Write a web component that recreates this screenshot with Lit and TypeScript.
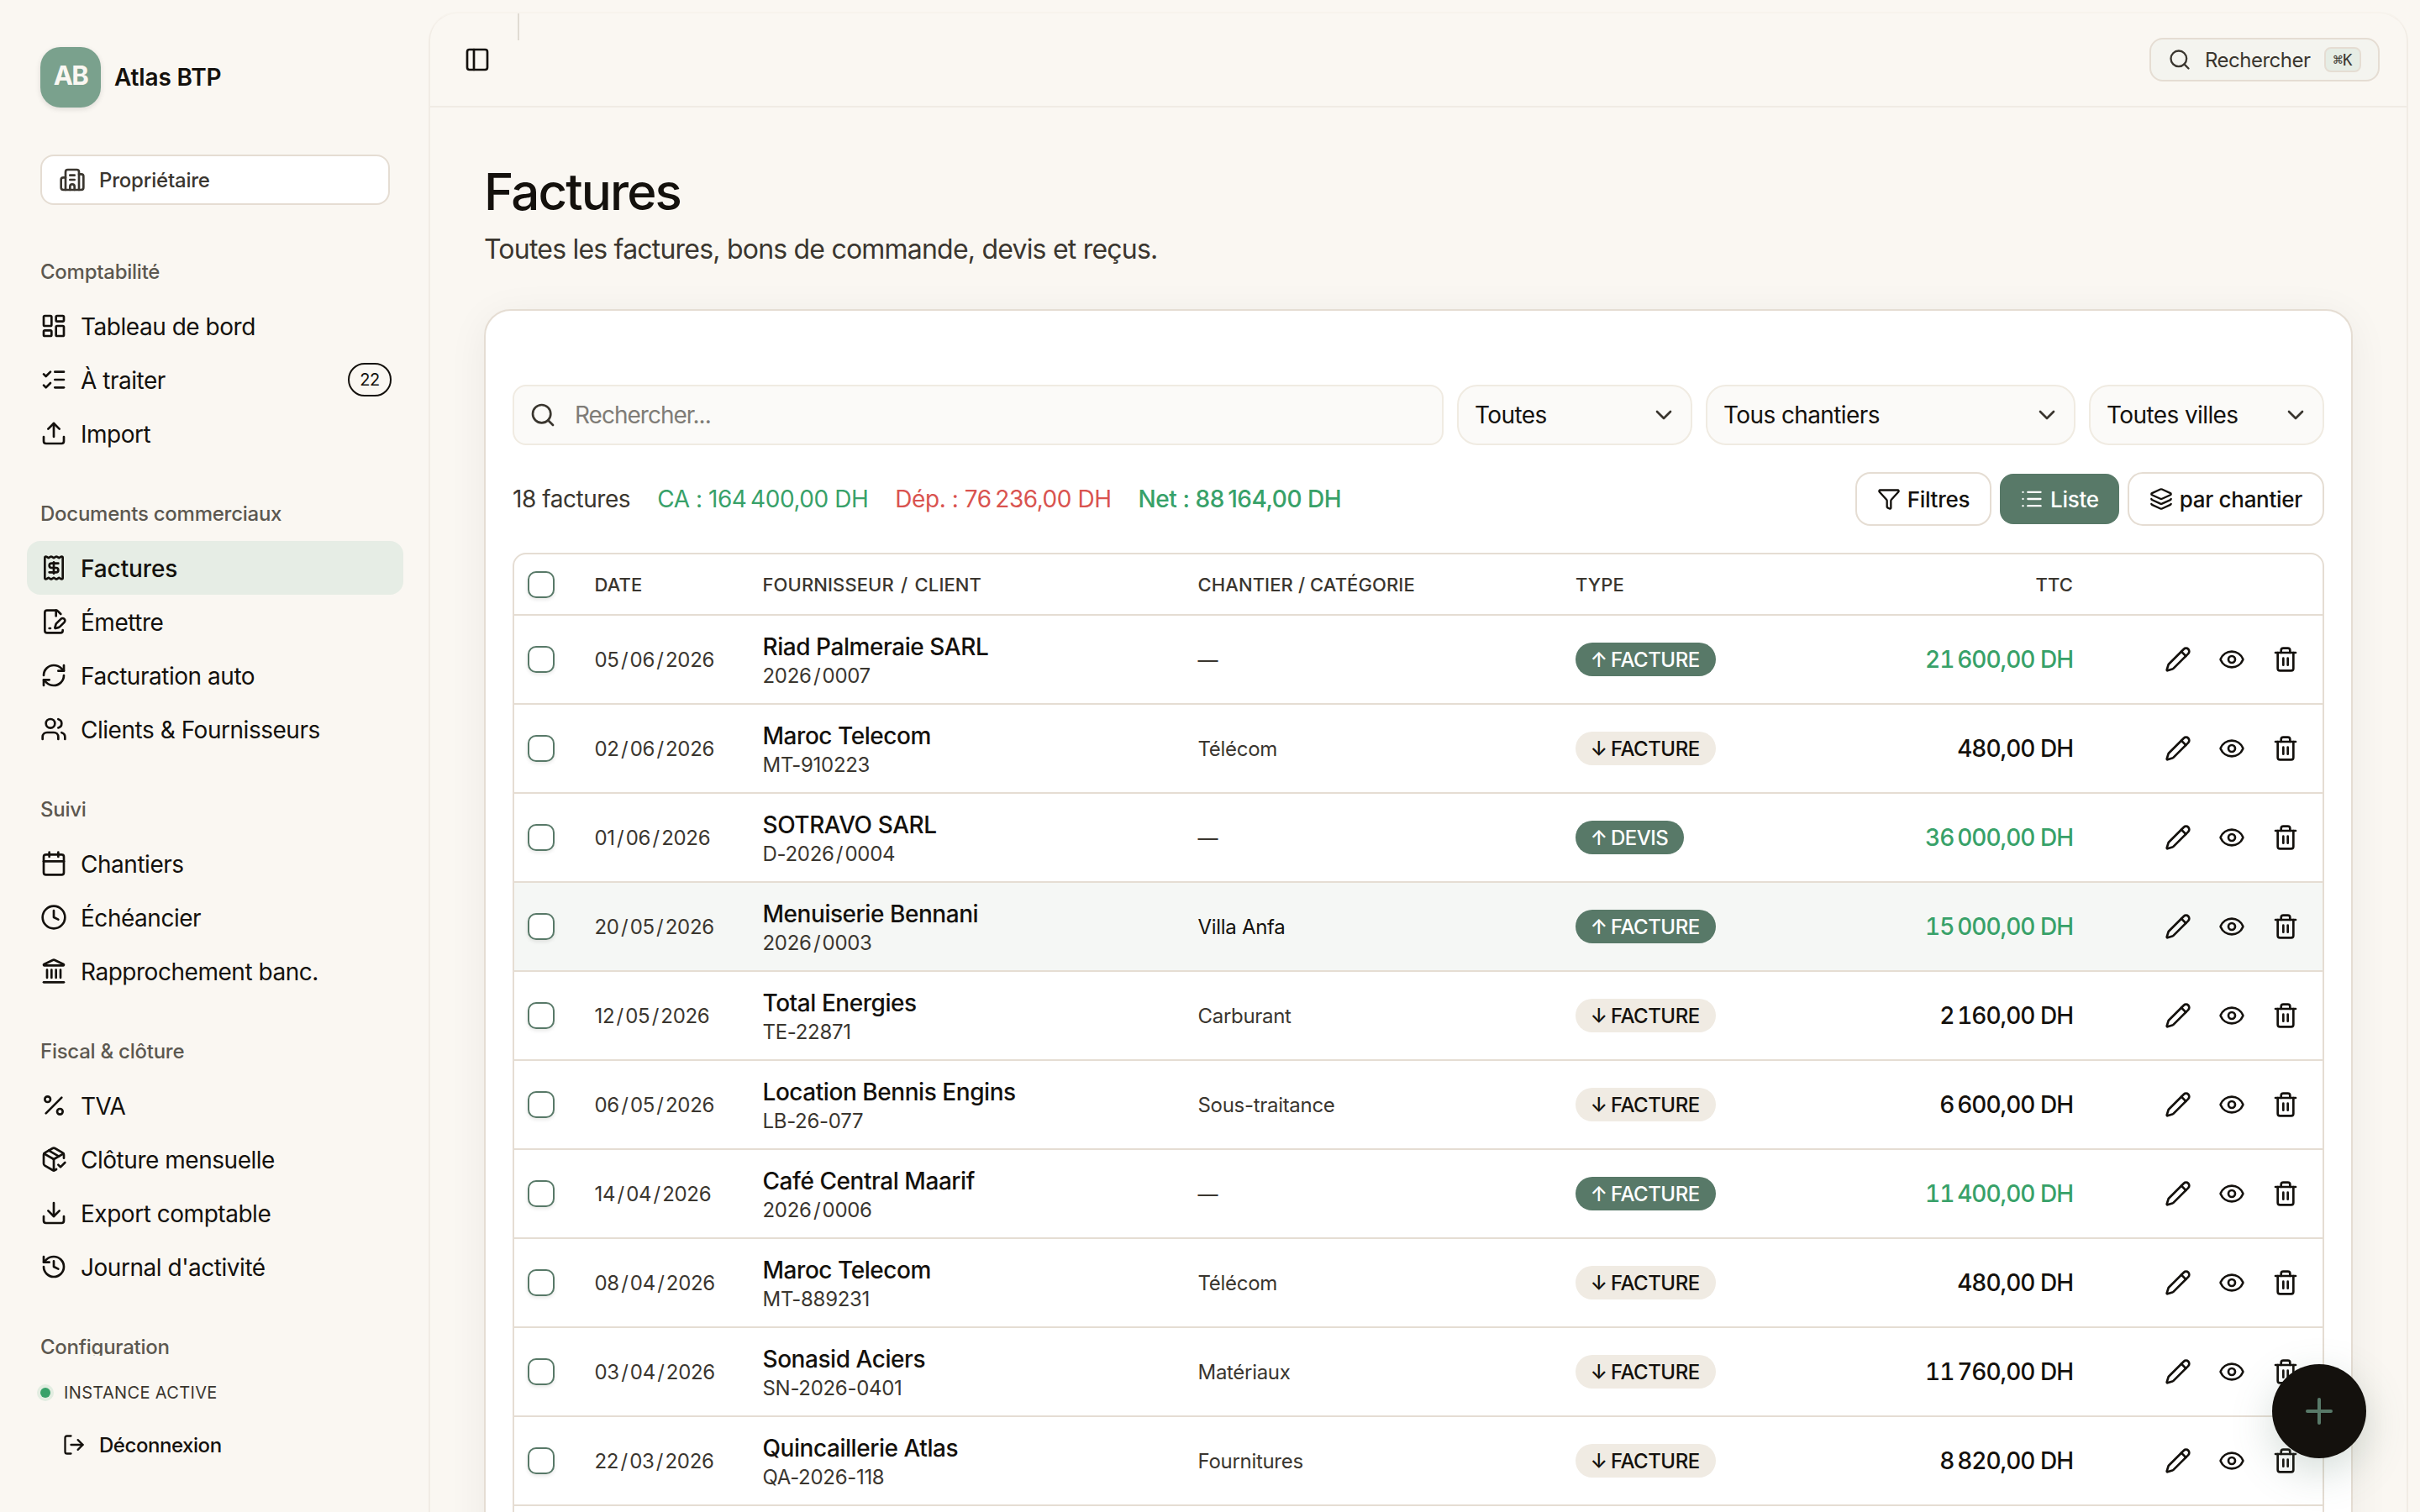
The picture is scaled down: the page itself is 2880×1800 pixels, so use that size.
import { LitElement, html, css, svg } from 'lit';
import { customElement, property } from 'lit/decorators.js';

const icons: Record<string, any> = {
  panel: svg`<rect width="18" height="18" x="3" y="3" rx="2"/><path d="M9 3v18"/>`,
  search: svg`<path d="m21 21-4.34-4.34"/><circle cx="11" cy="11" r="8"/>`,
  building: svg`<path d="M10 12h4"/><path d="M10 8h4"/><path d="M14 21v-3a2 2 0 0 0-4 0v3"/><path d="M6 10H4a2 2 0 0 0-2 2v7a2 2 0 0 0 2 2h16a2 2 0 0 0 2-2V9a2 2 0 0 0-2-2h-2"/><path d="M6 21V5a2 2 0 0 1 2-2h8a2 2 0 0 1 2 2v16"/>`,
  dashboard: svg`<rect width="7" height="9" x="3" y="3" rx="1"/><rect width="7" height="5" x="14" y="3" rx="1"/><rect width="7" height="9" x="14" y="12" rx="1"/><rect width="7" height="5" x="3" y="16" rx="1"/>`,
  checks: svg`<path d="M13 5h8"/><path d="M13 12h8"/><path d="M13 19h8"/><path d="m3 17 2 2 4-4"/><path d="m3 7 2 2 4-4"/>`,
  upload: svg`<path d="M12 3v12"/><path d="m17 8-5-5-5 5"/><path d="M21 15v4a2 2 0 0 1-2 2H5a2 2 0 0 1-2-2v-4"/>`,
  receipt: svg`<path d="M12 17V7"/><path d="M16 8h-6a2 2 0 0 0 0 4h4a2 2 0 0 1 0 4H8"/><path d="M4 3a1 1 0 0 1 1-1 1.3 1.3 0 0 1 .7.2l.933.6a1.3 1.3 0 0 0 1.4 0l.934-.6a1.3 1.3 0 0 1 1.4 0l.933.6a1.3 1.3 0 0 0 1.4 0l.933-.6a1.3 1.3 0 0 1 1.4 0l.934.6a1.3 1.3 0 0 0 1.4 0l.933-.6A1.3 1.3 0 0 1 19 2a1 1 0 0 1 1 1v18a1 1 0 0 1-1 1 1.3 1.3 0 0 1-.7-.2l-.933-.6a1.3 1.3 0 0 0-1.4 0l-.934.6a1.3 1.3 0 0 1-1.4 0l-.933-.6a1.3 1.3 0 0 0-1.4 0l-.933.6a1.3 1.3 0 0 1-1.4 0l-.934-.6a1.3 1.3 0 0 0-1.4 0l-.933.6a1.3 1.3 0 0 1-.7.2 1 1 0 0 1-1-1z"/>`,
  filePen: svg`<path d="m18.226 5.226-2.52-2.52A2.4 2.4 0 0 0 14 2H6a2 2 0 0 0-2 2v16a2 2 0 0 0 2 2h12a2 2 0 0 0 2-2v-.351"/><path d="M14 2v5"/><path d="M21.378 12.626a1 1 0 0 0-3.004-3.004l-4.01 4.012a2 2 0 0 0-.506.854l-.837 2.87a.5.5 0 0 0 .62.62l2.87-.837a2 2 0 0 0 .854-.506z"/><path d="M8 18h1"/>`,
  refresh: svg`<path d="M3 12a9 9 0 0 1 9-9 9.75 9.75 0 0 1 6.74 2.74L21 8"/><path d="M21 3v5h-5"/><path d="M21 12a9 9 0 0 1-9 9 9.75 9.75 0 0 1-6.74-2.74L3 16"/><path d="M8 16H3v5"/>`,
  users: svg`<path d="M16 21v-2a4 4 0 0 0-4-4H6a4 4 0 0 0-4 4v2"/><path d="M16 3.128a4 4 0 0 1 0 7.744"/><path d="M22 21v-2a4 4 0 0 0-3-3.87"/><circle cx="9" cy="7" r="4"/>`,
  calendar: svg`<path d="M8 2v4"/><path d="M16 2v4"/><rect width="18" height="18" x="3" y="4" rx="2"/><path d="M3 10h18"/>`,
  clock: svg`<path d="M12 6v6l4 2"/><circle cx="12" cy="12" r="10"/>`,
  landmark: svg`<path d="M10 18v-7"/><path d="M11.12 2.198a2 2 0 0 1 1.76.006l7.866 3.847c.476.233.31.949-.22.949H3.474c-.53 0-.695-.716-.22-.949z"/><path d="M14 18v-7"/><path d="M18 18v-7"/><path d="M3 22h18"/><path d="M6 18v-7"/>`,
  percent: svg`<path d="M19 5 5 19"/><circle cx="6.5" cy="6.5" r="2.5"/><circle cx="17.5" cy="17.5" r="2.5"/>`,
  packageCheck: svg`<path d="m16 17 2 2 4-4"/><path d="M21 11V8a2 2 0 0 0-1-1.73l-7-4a2 2 0 0 0-2 0l-7 4A2 2 0 0 0 3 8v8a2 2 0 0 0 1 1.73l7 4a2 2 0 0 0 2 0l1.32-.753"/><path d="m7.5 4.27 9 5.15"/><path d="M3.29 7 12 12l8.71-5"/><path d="M12 22V12"/>`,
  download: svg`<path d="M12 15V3"/><path d="M21 15v4a2 2 0 0 1-2 2H5a2 2 0 0 1-2-2v-4"/><path d="m7 10 5 5 5-5"/>`,
  history: svg`<path d="M3 12a9 9 0 1 0 9-9 9.75 9.75 0 0 0-6.74 2.74L3 8"/><path d="M3 3v5h5"/><path d="M12 7v5l4 2"/>`,
  logout: svg`<path d="m16 17 5-5-5-5"/><path d="M21 12H9"/><path d="M9 21H5a2 2 0 0 1-2-2V5a2 2 0 0 1 2-2h4"/>`,
  chevron: svg`<path d="m6 9 6 6 6-6"/>`,
  funnel: svg`<path d="M10 20a1 1 0 0 0 .553.895l2 1A1 1 0 0 0 14 21v-7a2 2 0 0 1 .517-1.341L21.74 4.67A1 1 0 0 0 21 3H3a1 1 0 0 0-.742 1.67l7.225 7.989A2 2 0 0 1 10 14z"/>`,
  list: svg`<path d="M3 5h.01"/><path d="M3 12h.01"/><path d="M3 19h.01"/><path d="M8 5h13"/><path d="M8 12h13"/><path d="M8 19h13"/>`,
  layers: svg`<path d="M12.83 2.18a2 2 0 0 0-1.66 0L2.6 6.08a1 1 0 0 0 0 1.83l8.58 3.91a2 2 0 0 0 1.66 0l8.58-3.9a1 1 0 0 0 0-1.83z"/><path d="M2 12a1 1 0 0 0 .58.91l8.6 3.91a2 2 0 0 0 1.65 0l8.58-3.9A1 1 0 0 0 22 12"/><path d="M2 17a1 1 0 0 0 .58.91l8.6 3.91a2 2 0 0 0 1.65 0l8.58-3.9A1 1 0 0 0 22 17"/>`,
  pencil: svg`<path d="M21.174 6.812a1 1 0 0 0-3.986-3.987L3.842 16.174a2 2 0 0 0-.5.83l-1.321 4.352a.5.5 0 0 0 .623.622l4.353-1.32a2 2 0 0 0 .83-.497z"/><path d="m15 5 4 4"/>`,
  eye: svg`<path d="M2.062 12.348a1 1 0 0 1 0-.696 10.75 10.75 0 0 1 19.876 0 1 1 0 0 1 0 .696 10.75 10.75 0 0 1-19.876 0"/><circle cx="12" cy="12" r="3"/>`,
  trash: svg`<path d="M10 11v6"/><path d="M14 11v6"/><path d="M19 6v14a2 2 0 0 1-2 2H7a2 2 0 0 1-2-2V6"/><path d="M3 6h18"/><path d="M8 6V4a2 2 0 0 1 2-2h4a2 2 0 0 1 2 2v2"/>`,
  plus: svg`<path d="M5 12h14"/><path d="M12 5v14"/>`,
};

const groups = [
  {
    label: 'Comptabilité',
    items: [
      { icon: 'dashboard', text: 'Tableau de bord' },
      { icon: 'checks', text: 'À traiter', count: 22 },
      { icon: 'upload', text: 'Import' },
    ],
  },
  {
    label: 'Documents commerciaux',
    items: [
      { icon: 'receipt', text: 'Factures', active: true },
      { icon: 'filePen', text: 'Émettre' },
      { icon: 'refresh', text: 'Facturation auto' },
      { icon: 'users', text: 'Clients & Fournisseurs' },
    ],
  },
  {
    label: 'Suivi',
    items: [
      { icon: 'calendar', text: 'Chantiers' },
      { icon: 'clock', text: 'Échéancier' },
      { icon: 'landmark', text: 'Rapprochement banc.' },
    ],
  },
  {
    label: 'Fiscal & clôture',
    items: [
      { icon: 'percent', text: 'TVA' },
      { icon: 'packageCheck', text: 'Clôture mensuelle' },
      { icon: 'download', text: 'Export comptable' },
      { icon: 'history', text: "Journal d'activité" },
    ],
  },
  { label: 'Configuration', items: [] },
] as { label: string; items: { icon: string; text: string; count?: number; active?: boolean }[] }[];

// date, name, reference, site or category, type, outgoing (sale), amount
const invoices: [string, string, string, string, string, boolean, string][] = [
  ['05/06/2026', 'Riad Palmeraie SARL', '2026/0007', '—', 'FACTURE', true, '21 600,00'],
  ['02/06/2026', 'Maroc Telecom', 'MT-910223', 'Télécom', 'FACTURE', false, '480,00'],
  ['01/06/2026', 'SOTRAVO SARL', 'D-2026/0004', '—', 'DEVIS', true, '36 000,00'],
  ['20/05/2026', 'Menuiserie Bennani', '2026/0003', 'Villa Anfa', 'FACTURE', true, '15 000,00'],
  ['12/05/2026', 'Total Energies', 'TE-22871', 'Carburant', 'FACTURE', false, '2 160,00'],
  ['06/05/2026', 'Location Bennis Engins', 'LB-26-077', 'Sous-traitance', 'FACTURE', false, '6 600,00'],
  ['14/04/2026', 'Café Central Maarif', '2026/0006', '—', 'FACTURE', true, '11 400,00'],
  ['08/04/2026', 'Maroc Telecom', 'MT-889231', 'Télécom', 'FACTURE', false, '480,00'],
  ['03/04/2026', 'Sonasid Aciers', 'SN-2026-0401', 'Matériaux', 'FACTURE', false, '11 760,00'],
  ['22/03/2026', 'Quincaillerie Atlas', 'QA-2026-118', 'Fournitures', 'FACTURE', false, '8 820,00'],
  ['', '', '', '', '', false, ''],
];

// slashes get a little air on both sides
const spaced = (text: string) =>
  text.split('/').map((part, i) => (i ? html`<span class="slash">/</span>${part}` : part));

@customElement('ui-icon')
export class UiIcon extends LitElement {
  @property() name = '';

  static styles = css`
    :host {
      display: block;
      flex: none;
      width: 32px;
      height: 32px;
    }

    svg {
      display: block;
      width: 100%;
      height: 100%;
      fill: none;
      stroke: currentColor;
      stroke-width: 2;
      stroke-linecap: round;
      stroke-linejoin: round;
    }
  `;

  render() {
    return html`<svg viewBox="0 0 24 24">${icons[this.name]}</svg>`;
  }
}

@customElement('side-bar')
export class SideBar extends LitElement {
  static styles = css`
    :host {
      display: flex;
      flex-direction: column;
      box-sizing: border-box;
      width: 512px;
      height: 1800px;
      padding: 56px 32px 0;
    }

    .brand {
      display: flex;
      align-items: center;
      gap: 16px;
      padding-left: 16px;
      height: 72px;
    }

    .logo {
      display: flex;
      align-items: center;
      justify-content: center;
      box-sizing: border-box;
      width: 72px;
      height: 72px;
      padding-bottom: 6px;
      border-radius: 24px;
      background: #7aa18d;
      color: #faf7f2;
      font-size: 31px;
      font-weight: 700;
      letter-spacing: -1.6px;
      box-shadow: 0 2px 6px rgba(20, 17, 13, 0.12);
    }

    .brand-name {
      font-size: 28px;
      font-weight: 600;
      letter-spacing: -0.15px;
    }

    .role {
      display: flex;
      align-items: center;
      gap: 16px;
      box-sizing: border-box;
      height: 60px;
      margin: 56px 16px 32px;
      padding: 0 20px;
      border: 2px solid #e5ddd3;
      border-radius: 16px;
      background: #fff;
      color: #3a362f;
      font-size: 24px;
      font-weight: 500;
      letter-spacing: -0.2px;
    }

    .nav {
      height: 1338px;
      overflow: hidden;
    }

    .group {
      padding: 16px 0;
    }

    .label {
      height: 64px;
      padding-left: 16px;
      line-height: 64px;
      color: #5c5850;
      font-size: 24px;
      font-weight: 500;
      letter-spacing: -0.25px;
    }

    .item {
      display: flex;
      align-items: center;
      gap: 16px;
      height: 64px;
      padding: 0 14px 0 16px;
      border-radius: 16px;
      font-size: 28px;
      letter-spacing: -0.47px;
    }

    .item.active {
      background: #e6ede5;
      font-weight: 500;
      letter-spacing: -0.1px;
    }

    .text {
      padding-top: 2px;
    }

    .count {
      box-sizing: border-box;
      width: 52px;
      height: 40px;
      margin-left: auto;
      border: 2px solid currentColor;
      border-radius: 20px;
      line-height: 36px;
      text-align: center;
      font-size: 20px;
      letter-spacing: -0.5px;
    }

    .status {
      display: flex;
      align-items: center;
      gap: 16px;
      height: 40px;
      margin-top: 24px;
      padding-left: 16px;
      color: #3a362f;
      font-size: 20px;
      letter-spacing: 0.35px;
    }

    .dot {
      width: 12px;
      height: 12px;
      border-radius: 50%;
      background: #38a169;
      box-shadow: 0 0 0 4px rgba(56, 161, 105, 0.12);
    }

    .logout {
      display: flex;
      align-items: center;
      gap: 16px;
      height: 56px;
      margin-top: 14px;
      padding-left: 42px;
      font-size: 24px;
      font-weight: 500;
      letter-spacing: -0.45px;
    }

    .logout ui-icon {
      width: 28px;
      height: 28px;
    }
  `;

  render() {
    return html`
      <div class="brand">
        <div class="logo">AB</div>
        <div class="brand-name">Atlas BTP</div>
      </div>
      <div class="role"><ui-icon name="building"></ui-icon>Propriétaire</div>
      <div class="nav">
        ${groups.map(
          (g) => html`
            <div class="group">
              <div class="label">${g.label}</div>
              ${g.items.map(
                (i) => html`
                  <div class="item ${i.active ? 'active' : ''}">
                    <ui-icon name=${i.icon}></ui-icon>
                    <span class="text">${i.text}</span>
                    ${i.count ? html`<span class="count">${i.count}</span>` : ''}
                  </div>
                `
              )}
            </div>
          `
        )}
      </div>
      <div class="status"><span class="dot"></span>INSTANCE ACTIVE</div>
      <div class="logout"><ui-icon name="logout"></ui-icon>Déconnexion</div>
    `;
  }
}

@customElement('invoice-table')
export class InvoiceTable extends LitElement {
  static styles = css`
    :host {
      display: block;
      border: 2px solid #e5ddd3;
      border-radius: 16px;
      overflow: hidden;
    }

    .row {
      display: grid;
      grid-template-columns: 95.5px 200px 518px 449.5px 351.5px 240.5px 1fr;
      align-items: center;
      box-sizing: border-box;
      height: 106px;
      border-bottom: 2px solid #e5ddd3;
    }

    .row.head {
      height: 73px;
      color: #3a362f;
      font-size: 22px;
      font-weight: 500;
      letter-spacing: 0.1px;
    }

    .row.hover {
      background: #f5f7f5;
    }

    .check {
      box-sizing: border-box;
      width: 32px;
      height: 32px;
      margin-left: 16px;
      border: 2px solid #587968;
      border-radius: 10px;
      background: #fff;
      box-shadow: 0 2px 4px rgba(20, 17, 13, 0.1);
    }

    .slash {
      margin: 0 2.3px;
    }

    .date {
      color: #3a362f;
      font-size: 24px;
      letter-spacing: -0.3px;
    }

    .party {
      padding-top: 3px;
    }

    .name {
      height: 36px;
      line-height: 36px;
      font-size: 28px;
      font-weight: 500;
      letter-spacing: -0.45px;
    }

    .ref {
      height: 34px;
      line-height: 34px;
      color: #3a362f;
      font-size: 24px;
      letter-spacing: -0.3px;
    }

    .site {
      color: #3a362f;
      font-size: 24px;
      letter-spacing: -0.3px;
    }

    .site.dark {
      color: #14110d;
    }

    .badge {
      display: inline-flex;
      align-items: center;
      gap: 6px;
      height: 40px;
      padding: 0 19px;
      border-radius: 20px;
      background: #f0ebe3;
      font-size: 24px;
      font-weight: 500;
      letter-spacing: -0.5px;
    }

    .badge.out {
      background: #587968;
      color: #fff;
    }

    .arrow {
      width: 17px;
      display: flex;
      justify-content: center;
    }

    .amount {
      text-align: right;
      font-size: 28px;
      font-weight: 500;
      letter-spacing: -1px;
      font-variant-numeric: tabular-nums;
    }

    .amount.out {
      color: #38a169;
    }

    .right {
      text-align: right;
    }

    .actions {
      display: flex;
      justify-content: flex-end;
      gap: 32px;
      padding-right: 28px;
    }
  `;

  render() {
    return html`
      <div class="row head">
        <span class="check"></span>
        <span>DATE</span>
        <span>${spaced('FOURNISSEUR / CLIENT')}</span>
        <span>CHANTIER / CATÉGORIE</span>
        <span>TYPE</span>
        <span class="right">TTC</span>
        <span></span>
      </div>
      ${invoices.map(
        ([date, name, ref, site, type, out, amount], i) => html`
          <div class="row ${i === 3 ? 'hover' : ''}">
            ${date
              ? html`
                  <span class="check"></span>
                  <span class="date">${spaced(date)}</span>
                  <div class="party">
                    <div class="name">${name}</div>
                    <div class="ref">${spaced(ref)}</div>
                  </div>
                  <span class="site ${site === 'Villa Anfa' ? 'dark' : ''}">${site}</span>
                  <div>
                    <span class="badge ${out ? 'out' : ''}">
                      <span class="arrow">${out ? '↑' : '↓'}</span><span>${type}</span>
                    </span>
                  </div>
                  <span class="amount ${out ? 'out' : ''}">${amount.replace(' ', '\u202f')} DH</span>
                  <div class="actions">
                    <ui-icon name="pencil"></ui-icon>
                    <ui-icon name="eye"></ui-icon>
                    <ui-icon name="trash"></ui-icon>
                  </div>
                `
              : ''}
          </div>
        `
      )}
    `;
  }
}

@customElement('app-root')
export class AppRoot extends LitElement {
  static styles = css`
    :host {
      display: flex;
      position: relative;
      width: 2880px;
      height: 1800px;
      overflow: hidden;
      background: #faf7f2;
      color: #14110d;
      font-family: Inter, 'Liberation Sans', sans-serif;
    }

    .panel {
      flex: 1;
      box-sizing: border-box;
      height: 1900px;
      margin: 16px 16px 0 0;
      border-radius: 32px;
      background: #faf7f2;
      box-shadow: 0 2px 0 2px #f1ece5, 0 0 0 2px #f7f3ed;
    }

    .topbar {
      display: flex;
      align-items: center;
      justify-content: space-between;
      box-sizing: border-box;
      height: 112px;
      padding: 0 32px 0 40px;
      border-bottom: 2px solid #f0ebe4;
    }

    .toggle {
      display: flex;
      align-items: center;
      align-self: stretch;
      gap: 32px;
    }

    .separator {
      align-self: flex-start;
      width: 2px;
      height: 32px;
      background: #e0dbd3;
    }

    .quick {
      display: flex;
      align-items: center;
      box-sizing: border-box;
      width: 274px;
      height: 52px;
      padding: 0 20px;
      border: 2px solid #e5ddd3;
      border-radius: 16px;
      background: #f4f4ef;
      color: #3a362f;
      font-size: 24px;
      letter-spacing: -0.5px;
    }

    .quick ui-icon {
      width: 28px;
      height: 28px;
      margin-right: 16px;
    }

    .kbd {
      box-sizing: border-box;
      width: 44px;
      height: 30px;
      margin-left: auto;
      border: 2px solid #e5ddd3;
      border-radius: 8px;
      background: #e6ede5;
      line-height: 26px;
      text-align: center;
      font-family: 'DejaVu Sans Mono', monospace;
      font-size: 19px;
      letter-spacing: 0;
    }

    .content {
      padding: 64px;
    }

    .title {
      margin: 0;
      height: 72px;
      line-height: 72px;
      font-size: 60px;
      font-weight: 500;
      letter-spacing: -1.85px;
    }

    .subtitle {
      margin: 8px 0 0;
      height: 48px;
      line-height: 49px;
      color: #3a362f;
      font-size: 32px;
      letter-spacing: -0.79px;
    }

    .card {
      box-sizing: border-box;
      height: 1600px;
      margin-top: 48px;
      padding: 88px 32px 0;
      border: 2px solid #e5ddd3;
      border-radius: 32px;
      background: #fff;
      box-shadow: 0 8px 48px rgba(20, 17, 13, 0.06);
    }

    .filters {
      display: grid;
      grid-template-columns: 1fr 280px 440px 280px;
      gap: 16px;
    }

    .field {
      display: flex;
      align-items: center;
      justify-content: space-between;
      box-sizing: border-box;
      height: 72px;
      padding: 0 16px 0 19px;
      border: 2px solid #f0ebe2;
      border-radius: 24px;
      background: #fbfaf8;
      font-size: 28px;
      letter-spacing: -0.6px;
    }

    .field ui-icon {
      color: #3a362f;
    }

    .field.search {
      justify-content: flex-start;
      gap: 22px;
      padding-left: 18px;
      border-radius: 16px;
      color: #7f7c77;
      letter-spacing: -1px;
    }

    .summary {
      display: flex;
      align-items: center;
      gap: 32px;
      height: 64px;
      margin: 32px 0;
      font-size: 28px;
      letter-spacing: -0.45px;
    }

    .muted {
      color: #3a362f;
    }

    .green {
      color: #38a169;
    }

    .red {
      color: #d9534f;
    }

    .net {
      color: #38a169;
      font-weight: 550;
    }

    .buttons {
      display: flex;
      gap: 8px;
      margin-left: auto;
    }

    .button {
      display: flex;
      align-items: center;
      gap: 8px;
      box-sizing: border-box;
      height: 64px;
      padding: 0 24px;
      border: 2px solid #e5ddd3;
      border-radius: 18px;
      font-size: 26px;
      font-weight: 500;
      letter-spacing: -0.3px;
    }

    .button ui-icon {
      width: 28px;
      height: 28px;
    }

    .button.on {
      border-color: transparent;
      background: #587968;
      background-clip: padding-box;
      color: #fff;
    }

    .fab {
      position: absolute;
      right: 64px;
      bottom: 64px;
      display: flex;
      align-items: center;
      justify-content: center;
      width: 112px;
      height: 112px;
      border-radius: 50%;
      background: #14110d;
      color: #587968;
      box-shadow: 0 16px 48px rgba(88, 121, 104, 0.25);
    }

    .fab ui-icon {
      width: 48px;
      height: 48px;
    }
  `;

  render() {
    return html`
      <side-bar></side-bar>
      <div class="panel">
        <div class="topbar">
          <div class="toggle">
            <ui-icon name="panel"></ui-icon>
            <span class="separator"></span>
          </div>
          <div class="quick">
            <ui-icon name="search"></ui-icon>
            <span>Rechercher</span>
            <span class="kbd">⌘K</span>
          </div>
        </div>
        <div class="content">
          <h1 class="title">Factures</h1>
          <p class="subtitle">Toutes les factures, bons de commande, devis et reçus.</p>
          <div class="card">
            <div class="filters">
              <div class="field search"><ui-icon name="search"></ui-icon>Rechercher...</div>
              <div class="field">Toutes<ui-icon name="chevron"></ui-icon></div>
              <div class="field">Tous chantiers<ui-icon name="chevron"></ui-icon></div>
              <div class="field">Toutes villes<ui-icon name="chevron"></ui-icon></div>
            </div>
            <div class="summary">
              <span class="muted">18 factures</span>
              <span class="green">CA : 164\u202f400,00 DH</span>
              <span class="red">Dép. : 76\u202f236,00 DH</span>
              <span class="net">Net : 88\u202f164,00 DH</span>
              <div class="buttons">
                <div class="button"><ui-icon name="funnel"></ui-icon>Filtres</div>
                <div class="button on"><ui-icon name="list"></ui-icon>Liste</div>
                <div class="button"><ui-icon name="layers"></ui-icon>par chantier</div>
              </div>
            </div>
            <invoice-table></invoice-table>
          </div>
        </div>
      </div>
      <div class="fab"><ui-icon name="plus"></ui-icon></div>
    `;
  }
}
